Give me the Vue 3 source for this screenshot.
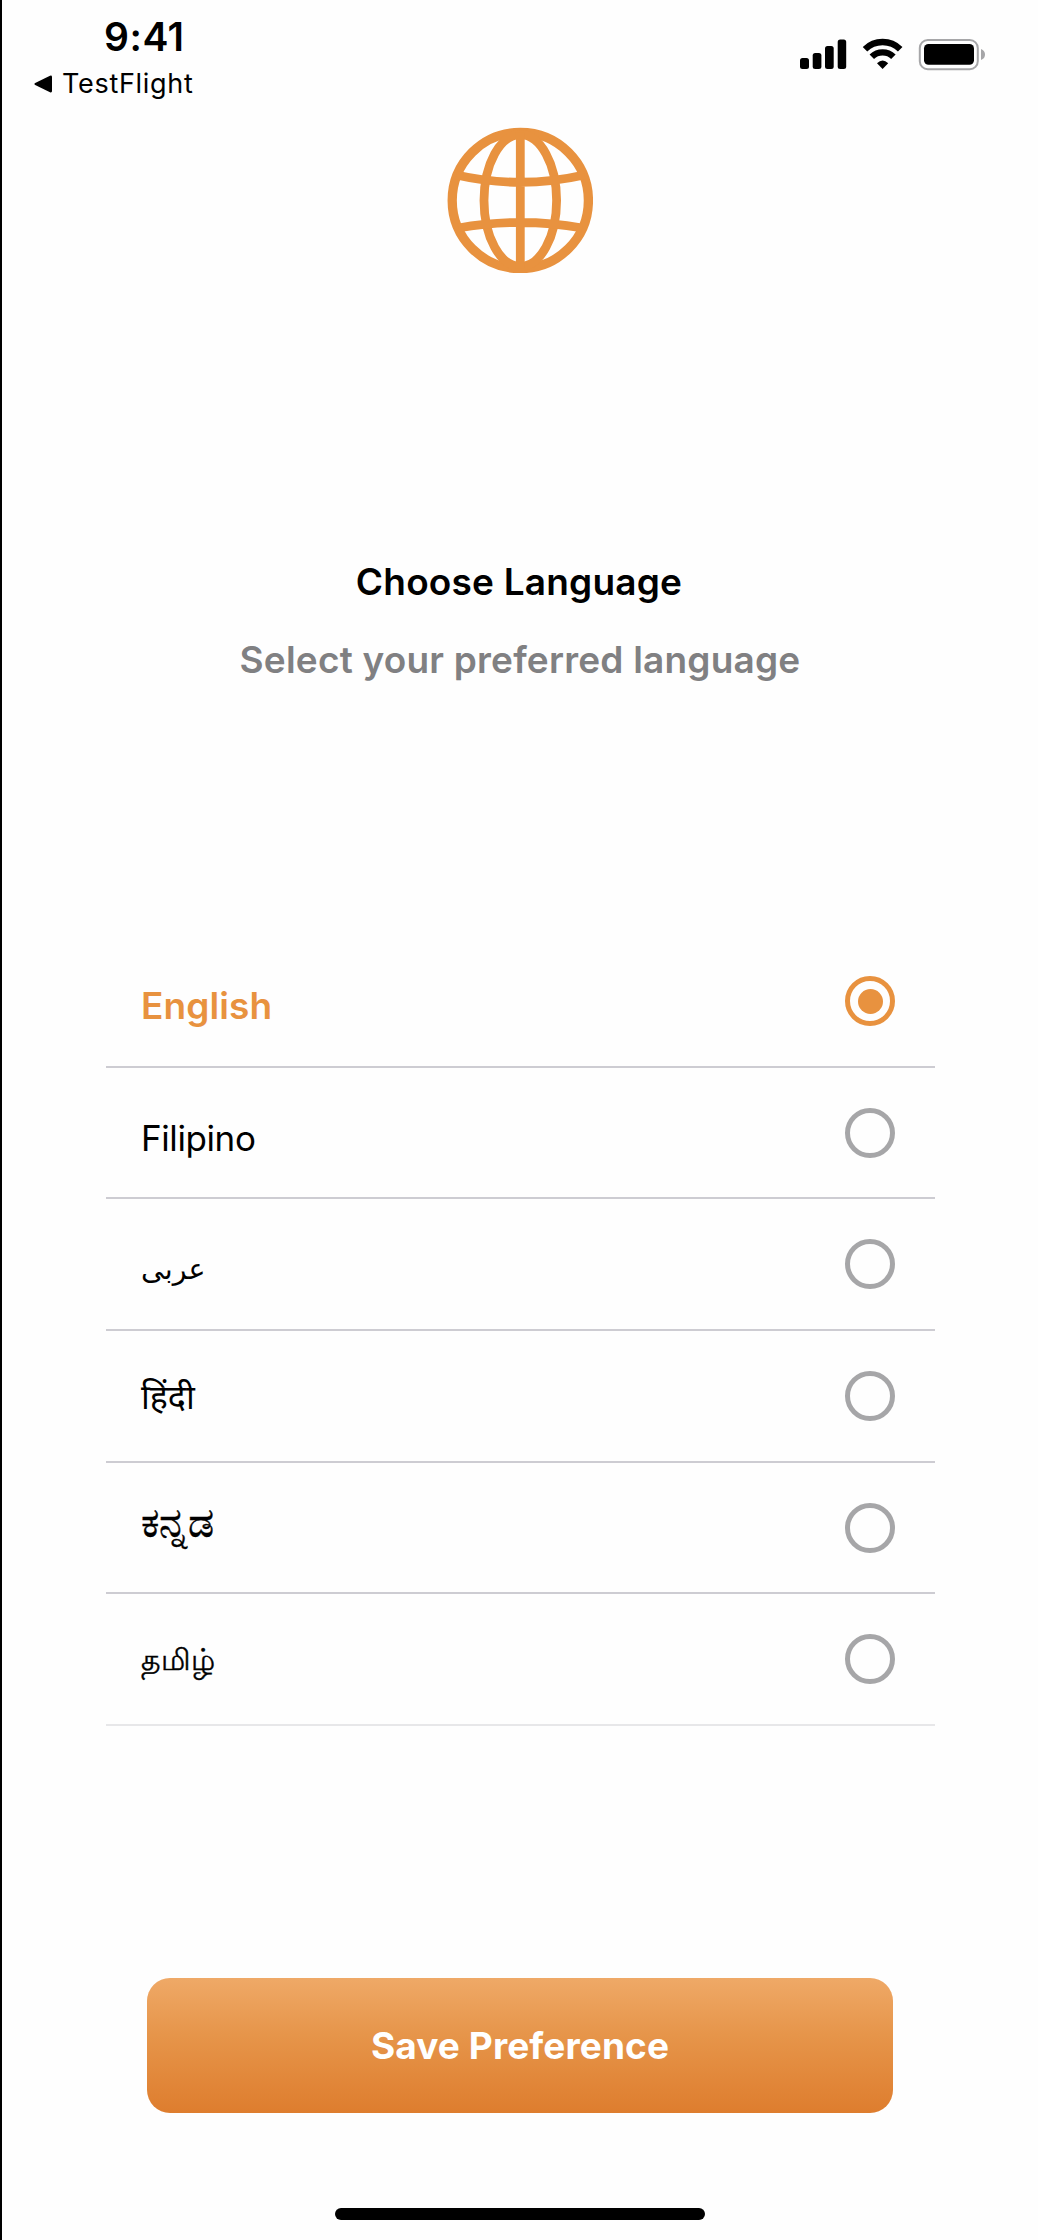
<script setup>
import { ref } from 'vue'

const languages = [
  { code: 'en', label: 'English', dir: 'ltr' },
  { code: 'fil', label: 'Filipino', dir: 'ltr' },
  { code: 'ar', label: 'عربى', dir: 'rtl' },
  { code: 'hi', label: 'हिंदी', dir: 'ltr' },
  { code: 'kn', label: 'ಕನ್ನಡ', dir: 'ltr' },
  { code: 'ta', label: 'தமிழ்', dir: 'ltr' },
]
const selected = ref('en')
</script>

<template>
  <main class="screen">
    <header class="status">
      <div class="left">
        <div class="time">9:41</div>
        <div class="back">
          <svg width="19" height="18" viewBox="0 0 19 18"><path d="M1.2 8 16 .7Q18 0 18 2v14q0 2-2 1.300L1.200 10Q-.4 9 1.200 8Z" fill="#000" /></svg>
          <span>TestFlight</span>
        </div>
      </div>
      <svg class="indicators" width="190" height="34" viewBox="798 37 190 34">
        <rect x="800" y="58" width="9" height="11" rx="2.500" />
        <rect x="812.700" y="53" width="8.700" height="16" rx="2.500" />
        <rect x="825" y="46" width="8.700" height="23" rx="2.500" />
        <rect x="837.700" y="39.500" width="8.500" height="29.500" rx="2.500" />
        <g fill="none" stroke="#000" stroke-width="6.400">
          <path d="M865 49.300A25 25 0 0 1 900.200 49.300" />
          <path d="M871.800 56.800A15.500 15.500 0 0 1 893.400 56.800" />
        </g>
        <path d="M882.600 69 877 63.300Q882.600 57.800 888.200 63.300Z" />
        <rect x="919.800" y="40" width="58" height="29.200" rx="8" fill="none" stroke="#a6a6a8" stroke-width="2" />
        <rect x="924" y="44" width="50" height="20.800" rx="4.500" />
        <path d="M981 49Q985 50.500 985 54.500T981 60Z" fill="#a6a6a8" />
      </svg>
    </header>

    <svg class="globe" width="146" height="146" viewBox="-73.300 -73.500 146 146" fill="none" stroke="#e8923f" stroke-width="8.800">
      <circle r="68.100" stroke-width="9.300" />
      <ellipse rx="36.300" ry="66" />
      <path d="M0-68V68M-64-25.500Q0-11 64-25.500M-62 27.500Q0 16.500 62 27.500" />
    </svg>

    <h1>Choose Language</h1>
    <p class="subtitle">Select your preferred language</p>

    <ul class="list">
      <li v-for="l in languages" :key="l.code" :class="{ active: l.code === selected }" @click="selected = l.code">
        <span class="label" :class="l.code" :lang="l.code" :dir="l.dir">{{ l.label }}</span>
        <span class="radio"></span>
      </li>
    </ul>

    <button class="save">Save Preference</button>
    <div class="home"></div>
  </main>
</template>

<style>
body { margin: 0; background: #fefefe; }
</style>

<style scoped>
* { box-sizing: border-box; }
.screen {
  width: 1038px;
  height: 2240px;
  overflow: hidden;
  display: flex;
  flex-direction: column;
  border-left: 2px solid #000;
  background: #fefefe;
  color: #000;
  font-family: Inter, "Noto Sans", "DejaVu Sans", sans-serif;
}
.status { height: 127px; display: flex; justify-content: space-between; flex: none; }
.left { padding: 13px 0 0 32px; }
.time { padding-left: 70px; font-size: 39px; font-weight: 600; line-height: 48px; letter-spacing: .5px; }
.back { display: flex; align-items: center; gap: 9px; margin-top: 7px; font-size: 27px; line-height: 32px; letter-spacing: .7px; }
.indicators { margin: 37px 50px 0 0; flex: none; }
.globe { margin-left: 445px; flex: none; }
h1 { margin: 285px 0 0; padding-right: 2px; text-align: center; font-size: 37px; line-height: 48px; font-weight: 600; letter-spacing: .2px; }
.subtitle { margin: 30px 0 0; text-align: center; font-size: 37px; line-height: 48px; font-weight: 600; letter-spacing: .2px; color: #808082; }
.list { list-style: none; margin: 252px 0 0 103.500px; padding: 0; width: 829px; flex: none; }
li { height: 131.700px; display: flex; justify-content: space-between; padding: 0 39.500px 0 35.500px; border-bottom: 2px solid #cdccd2; }
li:last-child { border-color: #e7e7e9; }
.label { line-height: 48px; }
.en { margin-top: 46px; font-size: 37px; letter-spacing: .1px; }
.fil { margin-top: 46px; font-size: 35px; letter-spacing: -.4px; }
.ar { margin-top: 45.400px; font-size: 28.500px; }
.hi { margin-top: 42.400px; font-size: 34px; }
.kn { margin-top: 35.500px; font-size: 41px; -webkit-text-stroke: .4px #000; }
.ta { margin-top: 40.500px; font-size: 30.200px; -webkit-text-stroke: .4px #000; }
.radio { width: 50px; height: 50px; margin-top: 40px; border: 5px solid #a6a6a8; border-radius: 50%; display: flex; align-items: center; justify-content: center; }
.active .label { color: #e8923f; font-weight: 600; }
.active .radio { border-color: #e8923f; }
.active .radio::after { content: ""; width: 25px; height: 25px; border-radius: 50%; background: #e8923f; }
.save {
  width: 746px; height: 135px; margin: 252px 0 0 145px; padding: 0; border: 0; border-radius: 23px; flex: none;
  background: linear-gradient(#efa967, #e6954a 42%, #de7d2e);
  color: #fff; font: 700 37px/48px Inter, sans-serif; letter-spacing: .1px;
}
.home { width: 370px; height: 12.500px; margin: 94.500px 0 0 333px; border-radius: 7px; background: #000; flex: none; }
</style>
